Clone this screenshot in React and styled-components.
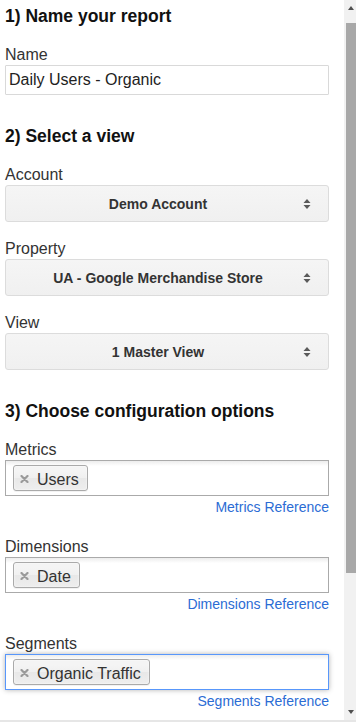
import React from "react";
import styled, { createGlobalStyle } from "styled-components";

const GlobalStyle = createGlobalStyle`
  html, body {
    margin: 0;
    padding: 0;
    background: #fff;
  }
  body {
    font-family: "Liberation Sans", Arial, sans-serif;
    color: #333;
  }
`;

const Frame = styled.div`
  display: flex;
  height: 720px;
  border-bottom: 2px solid #e6e6e6;
  overflow: hidden;
`;

const Content = styled.div`
  flex: 1;
  min-width: 0;
  padding: 6px 15px 0 5px;
  overflow: hidden;
`;

const ScrollTrack = styled.div`
  flex: none;
  width: 12px;
  display: flex;
  flex-direction: column;
  background: #f1f1f1;
`;

const ScrollButton = styled.div`
  flex: none;
  height: 16px;
  display: flex;
  align-items: center;
  justify-content: center;
  padding-left: 2px;
`;

const ScrollThumb = styled.div`
  flex: none;
  height: 550px;
  margin: 7px 0 0 2px;
  background: #a8a8a8;
`;

const ScrollRest = styled.div`
  flex: 1;
`;

const Heading = styled.h3`
  margin: ${(p) => (p.$first ? "0" : "31px")} 0 0 0;
  font-size: 17.5px;
  line-height: 21px;
  font-weight: bold;
  color: #111;
`;

const Label = styled.div`
  margin-top: ${(p) => p.$gap || 19}px;
  margin-bottom: 1px;
  font-size: 16px;
  line-height: 18px;
  color: #333;
`;

const TextInput = styled.input`
  display: block;
  width: 100%;
  height: 30px;
  box-sizing: border-box;
  margin: 0;
  padding: 0 3px;
  border: 1px solid #d9d9d9;
  border-radius: 1px;
  font-family: "Liberation Sans", Arial, sans-serif;
  font-size: 16px;
  color: #222;
  background: #fff;
  outline: none;
`;

const Dropdown = styled.div`
  display: flex;
  align-items: center;
  gap: 1px;
  height: 37px;
  box-sizing: border-box;
  padding: 0 17px 0 8px;
  border: 1px solid #dcdcdc;
  border-radius: 3px;
  background: linear-gradient(to bottom, #f5f5f5, #f0f0f0);
  cursor: pointer;
`;

const DropdownText = styled.span`
  flex: 1;
  text-align: center;
  font-size: 14px;
  font-weight: bold;
  color: #333;
  white-space: nowrap;
`;

const Chooser = styled.div`
  display: flex;
  flex-wrap: wrap;
  align-items: flex-start;
  height: 36px;
  box-sizing: border-box;
  padding: 4px 7px;
  border: 1px solid ${(p) => (p.$active ? "#5897fb" : "#aaa")};
  box-shadow: ${(p) => (p.$active ? "0 0 5px rgba(0, 0, 0, 0.3)" : "none")};
  background: #fff linear-gradient(to bottom, #eee 1%, #fff 15%);
`;

const Tag = styled.span`
  display: inline-flex;
  align-items: center;
  gap: 8px;
  height: 26px;
  box-sizing: border-box;
  padding: 4px 8px 0 6px;
  border: 1px solid #aaa;
  border-radius: 3px;
  background: linear-gradient(to bottom, #f4f4f4 20%, #f0f0f0 50%, #e8e8e8 52%, #eee 100%);
  box-shadow: inset 0 0 2px #fff, 0 1px 0 rgba(0, 0, 0, 0.05);
  font-size: 16px;
  line-height: 20px;
  color: #333;
  white-space: nowrap;
`;

const TagRemove = styled.svg`
  flex: none;
  margin-top: -3px;
`;

const RefRow = styled.div`
  display: flex;
  justify-content: flex-end;
  margin-top: 1px;
  line-height: 20px;
`;

const RefLink = styled.a`
  font-size: 14px;
  color: #2b6cd4;
  text-decoration: none;
  cursor: pointer;
`;

function UpDownIcon() {
  return (
    <svg width="8" height="12" viewBox="0 0 8 12">
      <path d="M0.5 5 L4 1 L7.5 5 Z" fill="#5a5a5a" />
      <path d="M0.5 7 L7.5 7 L4 11 Z" fill="#5a5a5a" />
    </svg>
  );
}

function ScrollArrow({ down }) {
  return (
    <svg width="6" height="4" viewBox="0 0 6 4">
      <path d={down ? "M0 0 L6 0 L3 4 Z" : "M0 4 L3 0 L6 4 Z"} fill="#505050" />
    </svg>
  );
}

function SelectBox({ value }) {
  return (
    <Dropdown>
      <DropdownText>{value}</DropdownText>
      <UpDownIcon />
    </Dropdown>
  );
}

function TagItem({ children }) {
  return (
    <Tag>
      <TagRemove width="9" height="8" viewBox="0 0 9 8">
        <path d="M1.5 1 L7.5 7 M7.5 1 L1.5 7" stroke="#9a9a9a" strokeWidth="2.2" strokeLinecap="round" />
      </TagRemove>
      {children}
    </Tag>
  );
}

function TagField({ label, tag, link, active, first }) {
  return (
    <>
      <Label $gap={first ? 19 : 21}>{label}</Label>
      <Chooser $active={active}>
        <TagItem>{tag}</TagItem>
      </Chooser>
      <RefRow>
        <RefLink>{link}</RefLink>
      </RefRow>
    </>
  );
}

export default function App() {
  return (
    <>
      <GlobalStyle />
      <Frame>
        <Content>
          <Heading $first>1) Name your report</Heading>
          <Label>Name</Label>
          <TextInput defaultValue="Daily Users - Organic" />

          <Heading>2) Select a view</Heading>
          <Label>Account</Label>
          <SelectBox value="Demo Account" />
          <Label $gap={18}>Property</Label>
          <SelectBox value="UA - Google Merchandise Store" />
          <Label $gap={18}>View</Label>
          <SelectBox value="1 Master View" />

          <Heading>3) Choose configuration options</Heading>
          <TagField first label="Metrics" tag="Users" link="Metrics Reference" />
          <TagField label="Dimensions" tag="Date" link="Dimensions Reference" />
          <TagField label="Segments" tag="Organic Traffic" link="Segments Reference" active />
        </Content>
        <ScrollTrack>
          <ScrollButton>
            <ScrollArrow />
          </ScrollButton>
          <ScrollThumb />
          <ScrollRest />
          <ScrollButton>
            <ScrollArrow down />
          </ScrollButton>
        </ScrollTrack>
      </Frame>
    </>
  );
}
